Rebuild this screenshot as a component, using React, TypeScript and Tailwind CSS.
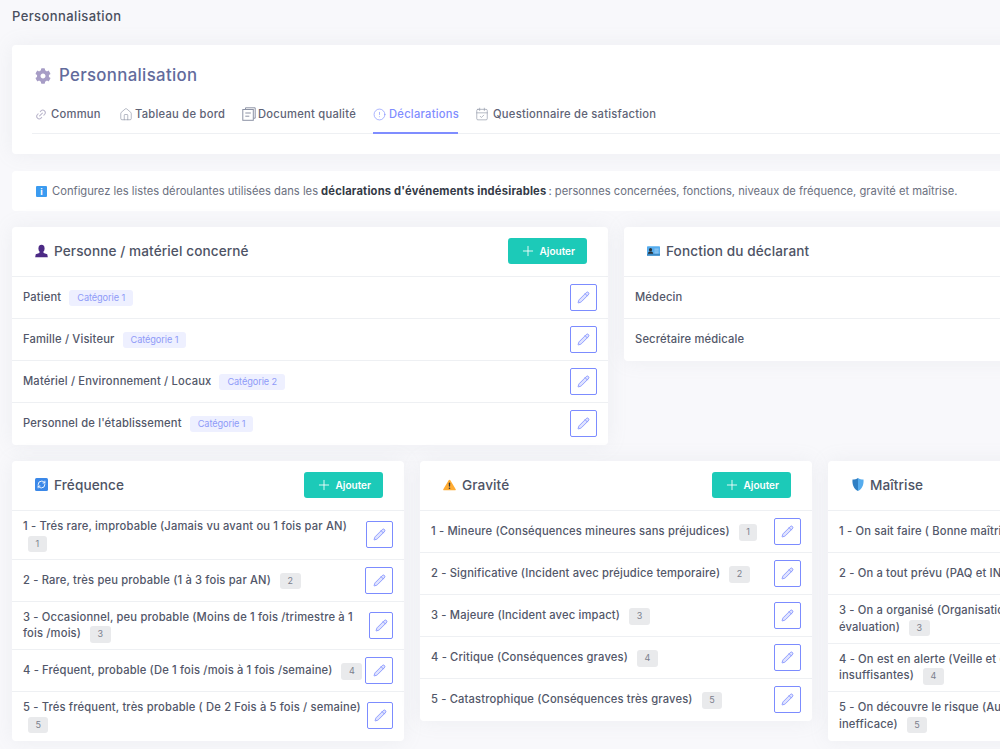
import { CalendarCheck, CircleAlert, House, Link2, Pencil, Plus, RefreshCw } from "lucide-react";
import { FaCog } from "react-icons/fa";
import type { ReactNode } from "react";

const font = { fontFamily: "Inter, 'Liberation Sans', sans-serif" };

type Row = {
  text: string;
  badge?: string;
  btn?: string;
};

const personnes: Row[] = [
  { text: "Patient", badge: "Catégorie 1" },
  { text: "Famille / Visiteur", badge: "Catégorie 1" },
  { text: "Matériel / Environnement / Locaux", badge: "Catégorie 2" },
  { text: "Personnel de l'établissement", badge: "Catégorie 1" },
];

const fonctions: Row[] = [{ text: "Médecin" }, { text: "Secrétaire médicale" }];

const frequences: Row[] = [
  { text: "1 - Trés rare, improbable (Jamais vu avant ou 1 fois par AN)\n", badge: "1", btn: "w-[27px]" },
  { text: "2 - Rare, très peu probable (1 à 3 fois par AN)", badge: "2", btn: "w-[28px]" },
  { text: "3 - Occasionnel, peu probable (Moins de 1 fois /trimestre à 1\nfois /mois)", badge: "3", btn: "w-[24px]" },
  { text: "4 - Fréquent, probable (De 1 fois /mois à 1 fois /semaine)", badge: "4", btn: "w-[28px]" },
  { text: "5 - Trés fréquent, très probable ( De 2 Fois à 5 fois / semaine)\n", badge: "5", btn: "w-[26px]" },
];

const gravites: Row[] = [
  { text: "1 - Mineure (Conséquences mineures sans préjudices)", badge: "1" },
  { text: "2 - Significative (Incident avec préjudice temporaire)", badge: "2" },
  { text: "3 - Majeure (Incident avec impact)", badge: "3" },
  { text: "4 - Critique (Conséquences graves)", badge: "4" },
  { text: "5 - Catastrophique (Conséquences très graves)", badge: "5" },
];

const maitrises: Row[] = [
  { text: "1 - On sait faire ( Bonne maîtrise des risques)", badge: "1" },
  { text: "2 - On a tout prévu (PAQ et INDICATEURS)", badge: "2" },
  { text: "3 - On a organisé (Organisation en place, sans\névaluation)", badge: "3" },
  { text: "4 - On est en alerte (Veille et contrôles\ninsuffisantes)", badge: "4" },
  { text: "5 - On découvre le risque (Aucune mesure ou\ninefficace)", badge: "5" },
];

function DocIcon() {
  return (
    <svg width="14" height="14" viewBox="0 0 14 14" fill="none" stroke="#8d93a5" strokeWidth="1">
      <path d="M3.5 2.5V.8h9.7v10.4h-1.7" />
      <rect x="0.8" y="2.5" width="10.5" height="10.8" />
      <path d="M3.3 6h5.5M3.3 9.2h4" />
    </svg>
  );
}

function PersonIcon() {
  return (
    <svg width="14" height="14" viewBox="0 0 14 14" fill="#4c2a85">
      <ellipse cx="7" cy="4.2" rx="3.3" ry="4" />
      <path d="M5 7.5h4l.3 1.6 3.9 1.5.6 3.2H.2l.6-3.2 3.9-1.5z" />
    </svg>
  );
}

function CardIdIcon() {
  return (
    <svg width="14" height="10" viewBox="0 0 14 10">
      <rect width="14" height="10" rx="0.5" fill="#55acee" />
      <rect y="8" width="14" height="2" fill="#3b88c3" />
      <circle cx="3.8" cy="3.6" r="1.7" fill="#292f33" />
      <path d="M1 8c0-2 1.2-2.5 2.8-2.5S6.6 6 6.6 8z" fill="#292f33" />
      <path d="M8 3h4.5M8 5h4.5M8 7h4.5" stroke="#bbdcf5" strokeWidth="0.8" />
    </svg>
  );
}

function RepeatIcon() {
  return (
    <span className="flex h-[13px] w-[13px] items-center justify-center rounded-[1.5px] bg-[#3b88e8]">
      <RefreshCw size={9} color="#ffffff" strokeWidth={2.4} />
    </span>
  );
}

function WarnIcon() {
  return (
    <svg width="14" height="12" viewBox="0 0 14 12">
      <path d="M7 .4c.4 0 .7.2.9.5l5.8 9.6c.3.6-.1 1.2-.8 1.2H1.1c-.7 0-1.1-.6-.8-1.2L6.100.9c.2-.3.5-.5.9-.5z" fill="#ffac33" />
      <rect x="6.300" y="3.300" width="1.400" height="4.600" rx="0.700" fill="#31373d" />
      <circle cx="7" cy="9.500" r="0.900" fill="#31373d" />
    </svg>
  );
}

function ShieldIcon() {
  return (
    <svg width="12" height="13" viewBox="0 0 12 13">
      <path d="M6 0c1.500 1 3.500 1.500 5.500 1.500C12 7 10 11 6 13z" fill="#55acee" />
      <path d="M6 0C4.500 1 2.500 1.500.500 1.500 0 7 2 11 6 13z" fill="#2f7fc4" />
    </svg>
  );
}

function AddButton() {
  return (
    <button className="flex h-[26px] w-[78.5px] shrink-0 items-center justify-center gap-[4px] rounded-[3px] bg-[#1ccab8] text-[10px] font-semibold text-white">
      <Plus size={16} strokeWidth={1.3} />
      Ajouter
    </button>
  );
}

function EditButton({ width = "w-[27px]" }: { width?: string }) {
  return (
    <button className={`flex h-[27px] shrink-0 items-center justify-center rounded-[2px] border border-[#7c8cff] bg-white ${width}`}>
      <Pencil size={13} color="#7c8cff" fill="#dfe3ff" strokeWidth={1.5} />
    </button>
  );
}

function ListCard({ icon, title, rows, category }: { icon: ReactNode; title: string; rows: Row[]; category?: boolean }) {
  return (
    <div className="rounded-[4px] bg-white shadow-[0_0_20px_rgba(154,161,171,0.12)]">
      <div className="flex h-[50px] items-center justify-between border-b border-[#eef0f3] pb-[1px] pl-[23px] pr-[21.5px]">
        <div className="flex items-center gap-[6px] text-[13.6px] font-medium tracking-[0.1px] text-[#4e5365]">
          <span className="flex w-[13px] justify-center">{icon}</span>
          {title}
        </div>
        <AddButton />
      </div>
      {rows.map((row, i) => (
        <div
          key={row.text}
          className={`flex items-center justify-between gap-[3px] border-b py-[7px] pl-[11px] pr-[11px] ${i < rows.length - 1 ? "border-[#eef0f3]" : "border-transparent"}`}
        >
          <div className="whitespace-pre text-[11.2px] font-medium leading-[16.8px] tracking-[0.16px] text-[#525769]">
            {row.text}
            {row.badge && (
              category ? (
                <span className="my-[-2px] ml-[8px] inline-block rounded-[3px] bg-[#eef0ff] px-[8px] text-[9.2px] font-normal leading-[16px] tracking-[-0.1px] text-[#8f9bf8]">
                  {row.badge}
                </span>
              ) : (
                <span className={`${row.text.endsWith("\n") ? "ml-[5px]" : "ml-[9px]"} my-[-2px] inline-block rounded-[3px] bg-[#e9eaec] px-[7.5px] text-[9px] font-normal leading-[16.5px] tracking-normal text-[#7b808c]`}>
                  {row.badge}
                </span>
              )
            )}
          </div>
          <EditButton width={row.btn} />
        </div>
      ))}
    </div>
  );
}

function Tab({ icon, label, width, active }: { icon: ReactNode; label: string; width: string; active?: boolean }) {
  return (
    <div className={`-mb-px flex h-[39px] items-center whitespace-nowrap border-b-2 pt-[1px] text-[11.2px] font-medium tracking-[0.25px] ${width} ${active ? "border-[#7f8dff] text-[#7f8dff]" : "border-transparent text-[#5e6376]"}`}>
      {icon}
      {label}
    </div>
  );
}

export default function App() {
  return (
    <div className="h-[749px] w-[1000px] overflow-hidden bg-[#f8f8fb]" style={font}>
      <div className="ml-[12px] flex w-[1208px] flex-col">
        <div className="flex h-[45px] items-start pt-[7px] text-[13px] font-medium leading-[18px] tracking-[0.4px] text-[#4a4f5e]">
          Personnalisation
        </div>

        {/* Entête et onglets */}
        <div className="h-[109px] rounded-[4px] bg-white px-[20px] pt-[20px] shadow-[0_0_20px_rgba(154,161,171,0.12)]">
          <div className="flex h-[22px] items-center gap-[8px] pl-[3px] text-[16.8px] font-medium tracking-[0.33px] text-[#626b9c]">
            <FaCog size={16} color="#a79dc6" />
            Personnalisation
          </div>
          <div className="mt-[8px] flex gap-[17px] border-b border-[#eef0f3] pl-[3px]">
            <Tab width="w-[67px]" icon={<span className="mr-[4px] flex w-[12px] justify-center"><Link2 size={13} color="#b9b5cb" className="-rotate-45" /></span>} label="Commun" />
            <Tab width="w-[106px]" icon={<span className="mr-[2px] flex w-[14px] justify-center"><House size={15} color="#8d93a5" strokeWidth={1.1} /></span>} label="Tableau de bord" />
            <Tab width="w-[114px]" icon={<span className="mr-[2px] flex w-[14px] justify-center"><DocIcon /></span>} label="Document qualité" />
            <Tab width="w-[85px]" icon={<span className="mr-[3px] flex w-[13px] justify-center"><CircleAlert size={15} strokeWidth={1.2} /></span>} label="Déclarations" active />
            <Tab width="w-[180px]" icon={<span className="mr-[4px] flex w-[14px] justify-center"><CalendarCheck size={16} color="#8d93a5" strokeWidth={1.1} /></span>} label="Questionnaire de satisfaction" />
          </div>
        </div>

        {/* Bandeau d'information */}
        <div className="mt-[17px] flex h-[40px] items-center rounded-[4px] bg-white pl-[24px] text-[11.2px] tracking-[0px] text-[#6b7080]">
          <span className="mr-[5px] flex h-[11px] w-[11px] items-center justify-center rounded-[1px] bg-[#3b9bf0] text-[9px] font-bold leading-none text-white">i</span>
          <span>Configurez les listes déroulantes utilisées dans les</span>
          <strong className="ml-[3px] mr-[2px] font-bold tracking-[0.19px] text-[#343a46]">déclarations d'événements indésirables</strong>
          <span>: personnes concernées, fonctions, niveaux de fréquence, gravité et maîtrise.</span>
        </div>

        <div className="mt-[16px] grid grid-cols-2 items-start gap-[16px]">
          <ListCard icon={<PersonIcon />} title="Personne / matériel concerné" rows={personnes} category />
          <ListCard icon={<CardIdIcon />} title="Fonction du déclarant" rows={fonctions} />
        </div>

        <div className="mt-[16px] grid grid-cols-3 items-start gap-[16px]">
          <ListCard icon={<RepeatIcon />} title="Fréquence" rows={frequences} />
          <ListCard icon={<WarnIcon />} title="Gravité" rows={gravites} />
          <ListCard icon={<ShieldIcon />} title="Maîtrise" rows={maitrises} />
        </div>
      </div>
    </div>
  );
}
